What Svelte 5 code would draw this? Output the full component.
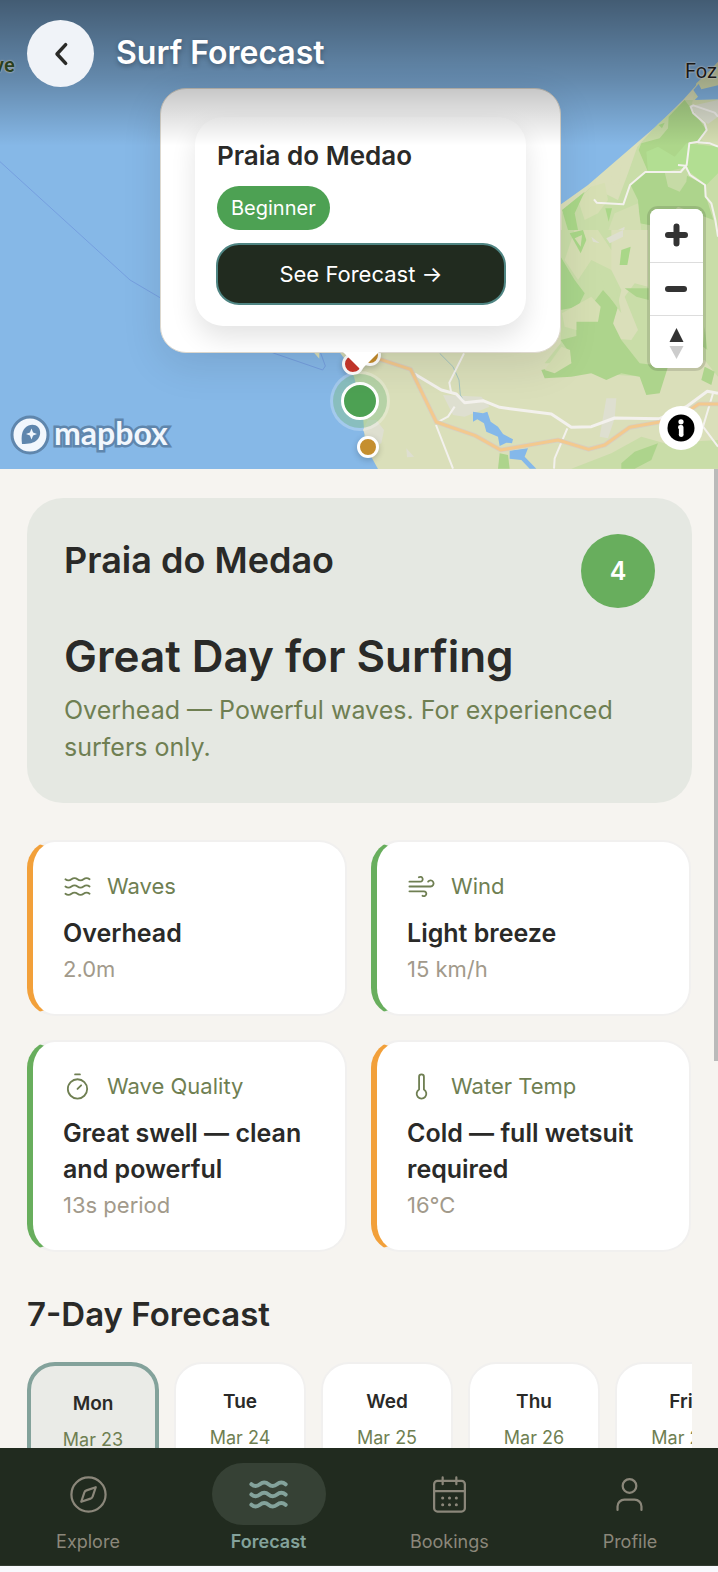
<script lang="ts">
  type IconName = 'waves' | 'wind' | 'timer' | 'thermometer' | 'compass' | 'calendar' | 'user'

  interface Condition {
    icon: IconName
    label: string
    title: string
    value: string
    tone: 'good' | 'fair'
  }

  const conditions: Condition[] = [
    { icon: 'waves', label: 'Waves', title: 'Overhead', value: '2.0m', tone: 'fair' },
    { icon: 'wind', label: 'Wind', title: 'Light breeze', value: '15 km/h', tone: 'good' },
    { icon: 'timer', label: 'Wave Quality', title: 'Great swell — clean and powerful', value: '13s period', tone: 'good' },
    { icon: 'thermometer', label: 'Water Temp', title: 'Cold — full wetsuit required', value: '16°C', tone: 'fair' },
  ]

  const days = [
    { day: 'Mon', date: 'Mar 23' },
    { day: 'Tue', date: 'Mar 24' },
    { day: 'Wed', date: 'Mar 25' },
    { day: 'Thu', date: 'Mar 26' },
    { day: 'Fri', date: 'Mar 27' },
    { day: 'Sat', date: 'Mar 28' },
    { day: 'Sun', date: 'Mar 29' },
  ]

  const tabs: { icon: IconName; label: string }[] = [
    { icon: 'compass', label: 'Explore' },
    { icon: 'waves', label: 'Forecast' },
    { icon: 'calendar', label: 'Bookings' },
    { icon: 'user', label: 'Profile' },
  ]

  let selectedDay = $state(0)
  let activeTab = $state('Forecast')
</script>

{#snippet icon(name: IconName, width: number)}
  <svg class="icon" viewBox="0 0 24 24" fill="none" stroke="currentColor" stroke-width={width} stroke-linecap="round" stroke-linejoin="round" aria-hidden="true">
    {#if name === 'waves'}
      {#each [0, 6, 12] as dy}
        <path transform="translate(0 {dy})" d="M2 6c.6.5 1.2 1 2.5 1C7 7 7 5 9.5 5c2.6 0 2.4 2 5 2 2.5 0 2.5-2 5-2 1.3 0 1.9.5 2.5 1" />
      {/each}
    {:else if name === 'wind'}
      <path d="M12.8 19.6A2 2 0 1 0 14 16H2" />
      <path d="M17.5 8a2.5 2.5 0 1 1 2 4H2" />
      <path d="M9.8 4.4A2 2 0 1 1 11 8H2" />
    {:else if name === 'timer'}
      <line x1="10" y1="2" x2="14" y2="2" />
      <line x1="12" y1="14" x2="15" y2="11" />
      <circle cx="12" cy="14" r="8" />
    {:else if name === 'thermometer'}
      <path d="M14 4v10.54a4 4 0 1 1-4 0V4a2 2 0 0 1 4 0Z" />
    {:else if name === 'compass'}
      <circle cx="12" cy="12" r="10" />
      <path d="m16.24 7.76-1.804 5.411a2 2 0 0 1-1.265 1.265L7.76 16.24l1.804-5.411a2 2 0 0 1 1.265-1.265z" />
    {:else if name === 'calendar'}
      <path d="M8 2v4M16 2v4M3 10h18" />
      <rect x="3" y="4" width="18" height="18" rx="2" />
      <path stroke-width="1.8" d="M8 14h.01M12 14h.01M16 14h.01M8 18h.01M12 18h.01M16 18h.01" />
    {:else}
      <circle cx="12" cy="7" r="4" />
      <path d="M19 21v-2a4 4 0 0 0-4-4H9a4 4 0 0 0-4 4v2" />
    {/if}
  </svg>
{/snippet}

<div class="app">
  <section class="map" aria-label="Surf spots map">
    <svg class="terrain" viewBox="0 0 2154 1407" preserveAspectRatio="xMidYMid slice" aria-hidden="true">
      <rect width="2154" height="1407" fill="#86b8e7" />
      <!-- coastline -->
      <path fill="#dadfba" d="M2154 185L2094 250 2049 300 1979 370 1909 430 1764 555 1684 612 1400 800 1014 1050 1040 1085 1062 1130 1080 1200 1090 1260 1094 1310 1108 1360 1134 1407H2154z" />
      <path fill="#dadfba" d="M940 1056L958 1076 958 1056z" />

      <!-- upper right land -->
      <g transform="translate(1074 0)">
        <path fill="#c9dda8" d="M980 300L900 372 838 440 810 520 780 600 700 560 612 640 612 720 1080 720 1080 300z" />
        <path fill="#d6dfb3" d="M1015 250L1080 190 1080 440 1030 420 1045 380 1000 320z" />
        <path fill="#dde0d0" d="M1000 318L1080 300 1080 350 1050 372 1010 340z" />
        <path fill="#86b8e7" d="M1006 270L1020 290 1010 300 1080 298 1080 256 1030 268 1022 252z" />
        <path fill="#add68a" d="M980 300L932 350 930 385 905 415 850 430 842 450 870 515 960 515 990 430 1020 425 1045 390 1010 340z" />
        <path fill="#b2de92" d="M865 455L900 440 950 470 985 430 1080 440 1080 520 1045 555 1000 520 870 515z" />
        <path fill="#add48c" d="M818 556L860 516 970 518 1042 556 1044 590 1066 660 960 620 900 680 845 670 840 600z" />
        <path fill="#c6dba6" d="M920 516L990 500 985 545 965 575 930 560z" />
        <path fill="#d6dfb3" d="M700 560L740 548 750 600 720 640 680 660 660 600z" />
        <path fill="#dadfba" d="M760 500L790 490 785 550 762 555z" />
        <path fill="#a9d788" d="M612 630L680 575 650 640 660 690 690 720 650 720 630 690z" />
        <path fill="#d3deb2" d="M770 640L840 610 850 690 800 720 740 720z" />
        <path fill="#dedfd0" d="M760 700L800 680 795 720 740 720z" />
        <path fill="#a9d788" d="M742 625L762 625 752 665z" />
        <path fill="#a9d788" d="M902 375L920 368 912 385z" />
        <path fill="#d6dfb3" d="M900 680L960 650 1000 700 960 720 890 720z" />
      </g>

      <!-- lower right land -->
      <g transform="translate(1074 690)">
        <path fill="#c9dda8" d="M608 0H1080V440L1040 390 990 400 900 420 860 440 700 430 610 400 560 400 608 340z" />
        <path fill="#d6dfb3" d="M650 0H720L760 60 850 100 780 130 700 90 660 150 620 90z" />
        <path fill="#dadfba" d="M760 0H870V170L830 160 800 200 840 300 820 330 755 325 790 180 760 120z" />
        <path fill="#a9d788" d="M635 10L675 0 685 30 668 70z" />
        <path fill="#d6dfb3" d="M650 25L672 15 668 50z" />
        <path fill="#a9d58b" d="M608 80L650 150 680 190 660 230 608 240z" />
        <path fill="#add48c" d="M655 275L690 240 735 180 780 230 765 280 790 330 845 400 930 410 905 490 865 495 845 440 790 430 745 450 700 430 640 440 560 445 550 420 640 400 635 370 608 330 655 318z" />
        <path fill="#d6dfb3" d="M612 250L700 200 728 230 720 275 655 275 655 300 620 290z" />
        <path fill="#add48c" d="M800 175H872V210L835 200z" />
        <path fill="#a9d788" d="M790 60L818 50 808 105 785 105z" />
        <path fill="#dedfd0" d="M745 25L795 0 795 20 755 40zM700 20L725 40 705 35z" />
        <path fill="#c9dda8" d="M720 110L770 150 790 250 740 180z" />
        <path fill="#add48c" d="M1040 410L1070 425 1060 465 1030 450zM1040 290L1048 360 1035 350z" />
        <path fill="#d6dfb3" d="M560 420L610 350 636 360 640 400 590 430z" />
        <path fill="#c9dda8" d="M640 716L760 670 850 620 920 640 1080 630V716z" />
        <path fill="#add48c" d="M790 700L830 665 900 640 880 690 830 716H790z" />
        <path fill="#add48c" d="M425 670L450 675 455 716H420z" />
        <path fill="#dedfd0" d="M255 495L370 500 395 530 320 560 285 555zM745 505L775 505 770 565 750 625 725 620zM30 570L55 570 78 600 70 640 40 650 15 600zM145 655L168 680 147 682z" />

        <path fill="none" stroke="#a5c5c0" stroke-width="3" d="M245 370L285 410 303 450 307 495 322 520" />
        <path fill="#84b8ea" d="M345 545L375 550 388 545 398 575 420 590 435 612 465 628 462 640 445 638 425 648 420 620 385 605 378 580 358 568 345 575z" />
        <path fill="#84b8ea" d="M455 662L510 655 500 680 535 716H515L490 690 455 686z" />

        <g fill="none" stroke="#f3f1ed" stroke-linejoin="round">
          <path stroke-width="9" d="M170 432L250 480 295 492 320 518 375 512 425 532 580 552 640 592 700 590 770 564 905 566 985 530 1048 484 1080 490" />
          <path stroke-width="6" d="M318 370L274 458 280 490M232 580L270 560 290 530M234 585L285 716M628 595L590 685 588 716M1065 490L1035 590 1080 650" />
        </g>
        <path fill="none" stroke="#d7cfc0" stroke-width="14" stroke-linejoin="round" d="M60 386L158 418 235 576 350 616 428 660 600 630 692 658 740 645 815 592 905 576 965 560 1022 522H1080" />
        <path fill="none" stroke="#f3c98e" stroke-width="9" stroke-linejoin="round" d="M60 386L158 418 235 576 350 616 428 660 600 630 692 658 740 645 815 592 905 576 965 560 1022 522H1080" />
      </g>

      <path fill="none" stroke="#f3f1ed" stroke-width="6" stroke-linejoin="round" d="M1782 598L1790 608 1870 613 1890 555 1936 516 2042 516 2060 495 2068 430 2094 425 2120 390 2114 370 2080 340 2072 320 2080 316 2144 338 2154 350M2094 427L2130 430 2154 440M2034 495L2056 497 2070 525 2115 555 2117 590 2134 610 2146 660 2154 710" />
      <path fill="none" stroke="#759fdf" stroke-width="3" d="M0 485L390 840 480 893 820 1059 968 1110 976 1098 962 1059" />
    </svg>

    <span class="place place-west">ve</span>
    <span class="place place-east">Foz</span>

    <span class="pin pin-red"></span>
    <span class="pin pin-amber"></span>
    <span class="pin pin-selected"></span>
    <span class="pin pin-south"></span>

    <div class="popup">
      <div class="popup-card">
        <h2>Praia do Medao</h2>
        <span class="badge">Beginner</span>
        <button class="popup-btn">See Forecast →</button>
      </div>
    </div>

    <header class="topbar">
      <button class="back" aria-label="Back">
        <svg width="32" height="32" viewBox="0 0 24 24" fill="none" stroke="currentColor" stroke-width="2.6" stroke-linecap="round" stroke-linejoin="round">
          <path d="M15.500 5l-6.500 7 6.500 7" />
        </svg>
      </button>
      <h1>Surf Forecast</h1>
    </header>

    <div class="map-controls">
      <button aria-label="Zoom in">
        <svg width="53" height="53" viewBox="0 0 53 53" stroke="#333" stroke-width="6" stroke-linecap="round"><path d="M18 26h17M26.500 17.500v17" /></svg>
      </button>
      <button aria-label="Zoom out">
        <svg width="53" height="53" viewBox="0 0 53 53" stroke="#333" stroke-width="6" stroke-linecap="round"><path d="M18 26h16" /></svg>
      </button>
      <button aria-label="Reset bearing to north">
        <svg width="53" height="53" viewBox="0 0 53 53"><path fill="#333" d="M26.500 12l7 14h-14z" /><path fill="#ccc" d="M26.500 43l7-13h-14z" /></svg>
      </button>
    </div>

    <a class="mapbox" href="#mapbox" aria-label="Mapbox">
      <svg width="40" height="40" viewBox="0 0 40 40" aria-hidden="true">
        <circle cx="20" cy="20" r="18" fill="#f2f7fd" stroke="#5f86ad" stroke-width="3" />
        <path fill="#5f86ad" d="M12 29c-1-8 0-13 3-16 4-4 10-4 13-1s3 9-1 13c-3 3-8 4-15 4z" />
        <path fill="#f2f7fd" d="M21.500 13.500l1.600 3.900 3.900 1.600-3.900 1.600-1.600 3.900-1.600-3.900-3.900-1.600 3.900-1.600z" />
      </svg>
      <span>mapbox</span>
    </a>

    <button class="info" aria-label="Map attribution">
      <svg width="28" height="28" viewBox="0 0 28 28" aria-hidden="true">
        <circle cx="14" cy="14" r="13.500" />
        <circle cx="14" cy="7.800" r="2.600" fill="#fff" />
        <path d="M13.300 13.200h.9v7.600M14 20.500h.4" fill="none" stroke="#fff" stroke-width="4.600" stroke-linecap="round" stroke-linejoin="round" />
      </svg>
    </button>
  </section>

  <main class="content">
    <section class="hero">
      <div class="hero-top">
        <h2 class="spot">Praia do Medao</h2>
        <span class="score">4</span>
      </div>
      <p class="verdict">Great Day for Surfing</p>
      <p class="summary">Overhead — Powerful waves. For experienced surfers only.</p>
    </section>

    <section class="conditions">
      {#each conditions as item}
        <article class="condition {item.tone}">
          <div class="condition-label">
            {@render icon(item.icon, 1.5)}
            <span>{item.label}</span>
          </div>
          <h3>{item.title}</h3>
          <p>{item.value}</p>
        </article>
      {/each}
    </section>

    <section class="week">
      <h2>7-Day Forecast</h2>
      <div class="days">
        {#each days as d, i}
          <button class="day" class:selected={selectedDay === i} onclick={() => (selectedDay = i)}>
            <strong>{d.day}</strong>
            <span>{d.date}</span>
          </button>
        {/each}
      </div>
    </section>

    <div class="scroll-thumb"></div>
  </main>

  <nav class="tabbar">
    {#each tabs as tab}
      <button class="tab" class:active={activeTab === tab.label} onclick={() => (activeTab = tab.label)}>
        <span class="tab-icon">{@render icon(tab.icon, activeTab === tab.label ? 2.4 : 1.3)}</span>
        <span class="tab-label">{tab.label}</span>
      </button>
    {/each}
  </nav>
</div>

<style>
  :global(body) {
    margin: 0;
    background: #f8f9fd;
  }

  .app {
    --ink: #2a2a28;
    --olive: #6f7f52;
    --forest: #212b1f;
    --sage: #83a29b;
    --good: #68ae5d;
    --fair: #f2a03a;
    display: flex;
    flex-direction: column;
    box-sizing: border-box;
    height: 100vh;
    padding-bottom: 6px;
    color: var(--ink);
    font-family: Inter, 'Liberation Sans', sans-serif;
  }

  h1,
  h2,
  h3,
  p {
    margin: 0;
  }

  button {
    padding: 0;
    border: none;
    font: inherit;
    color: inherit;
    cursor: pointer;
  }

  /* map */
  .map {
    position: relative;
    flex: none;
    height: 469px;
    overflow: hidden;
  }

  .terrain {
    display: block;
    width: 100%;
    height: 100%;
  }

  .place {
    position: absolute;
    font-family: Roboto, sans-serif;
    font-size: 20px;
    line-height: 24px;
    text-shadow: 0 0 2px #fff, 0 0 2px #fff;
  }

  .place-west {
    top: 53px;
    left: -6px;
    color: #3a5a2c;
    font-weight: 600;
  }

  .place-east {
    top: 59px;
    right: 1px;
    color: #222;
  }

  .pin {
    position: absolute;
    left: 50%;
    box-sizing: border-box;
    width: 22px;
    height: 22px;
    border: 3px solid #fff;
    border-radius: 50%;
    box-shadow: 0 2px 6px rgba(0, 0, 0, 0.2);
  }

  .pin-red {
    top: 353px;
    margin-left: -17px;
    background: #c9372c;
  }

  .pin-amber {
    top: 344px;
    margin-left: 0;
    background: #c58c2c;
  }

  .pin-selected {
    top: 382px;
    width: 38px;
    height: 38px;
    margin-left: -18px;
    background: #4da153;
    box-shadow: 0 0 0 8px rgba(77, 161, 83, 0.3), 0 0 0 11px rgba(255, 255, 255, 0.25);
  }

  .pin-south {
    top: 436px;
    margin-left: -2px;
    background: #c58f2f;
  }

  .popup {
    position: absolute;
    top: 88px;
    left: 50%;
    box-sizing: border-box;
    width: 401px;
    margin-left: -199px;
    padding: 28px 34px 26px;
    border: 1px solid #ddd8ce;
    border-radius: 26px;
    background: #fff;
    box-shadow: 0 12px 40px rgba(0, 0, 0, 0.1);
  }

  .popup::after {
    content: '';
    position: absolute;
    top: 100%;
    left: 50%;
    margin-left: -18px;
    border: 18px solid transparent;
    border-top-color: #fff;
    border-bottom: none;
  }

  .popup-card {
    display: flex;
    flex-direction: column;
    align-items: flex-start;
    padding: 21px 20px 21px 21px;
    border-radius: 28px;
    background: #fff;
    box-shadow: 0 12px 26px rgba(0, 0, 0, 0.11);
  }

  .popup-card h2 {
    margin: 0 0 12px 1px;
    font-size: 26px;
    line-height: 36px;
    font-weight: 600;
  }

  .badge {
    margin: 0 0 13px 1px;
    padding: 0 14px;
    border-radius: 22px;
    background: #4da153;
    color: #fff;
    font-size: 20px;
    line-height: 44px;
  }

  .popup-btn {
    align-self: stretch;
    height: 62px;
    border: 2px solid #4f8583;
    border-radius: 23px;
    background: var(--forest);
    color: #fff;
    font-size: 22px;
  }

  .topbar {
    position: absolute;
    top: 0;
    left: 0;
    right: 0;
    display: flex;
    align-items: flex-start;
    gap: 22px;
    box-sizing: border-box;
    height: 146px;
    padding: 20px 27px;
    background: linear-gradient(rgba(0, 0, 0, 0.5), rgba(0, 0, 0, 0.25) 55%, transparent);
  }

  .back {
    display: grid;
    place-items: center;
    width: 67px;
    height: 67px;
    border-radius: 50%;
    background: #f0f3f8;
    color: var(--ink);
  }

  .topbar h1 {
    color: #fff;
    font-size: 32px;
    line-height: 66px;
    font-weight: 600;
    text-shadow: 0 2px 5px rgba(0, 0, 0, 0.3);
  }

  .map-controls {
    position: absolute;
    top: 209px;
    right: 15px;
    display: flex;
    flex-direction: column;
    overflow: hidden;
    border-radius: 8px;
    background: #fff;
    box-shadow: 0 0 0 3px rgba(0, 0, 0, 0.12);
  }

  .map-controls button {
    width: 53px;
    height: 53px;
    background: #fff;
  }

  .map-controls button + button {
    border-top: 1px solid #ddd;
  }

  .map-controls svg {
    display: block;
  }

  .mapbox {
    position: absolute;
    left: 10px;
    bottom: 12px;
    display: flex;
    align-items: center;
    gap: 4px;
    color: #f2f7fd;
    font-family: Lato, sans-serif;
    font-size: 32px;
    line-height: 40px;
    font-weight: 700;
    text-decoration: none;
  }

  .mapbox span {
    padding-bottom: 4px;
    -webkit-text-stroke: 5px #5f86ad;
    paint-order: stroke fill;
  }

  .info {
    position: absolute;
    right: 15px;
    bottom: 19px;
    display: grid;
    place-items: center;
    width: 44px;
    height: 44px;
    border-radius: 50%;
    background: #fff;
  }

  /* forecast */
  .content {
    position: relative;
    flex: 1;
    min-height: 0;
    overflow: hidden;
    padding: 29px 26px 0 27px;
    background: #f6f4f0;
  }

  .scroll-thumb {
    position: absolute;
    top: 0;
    right: 0;
    width: 4px;
    height: 592px;
    background: #bababa;
  }

  .hero {
    padding: 36px 37px 37px;
    border-radius: 36px;
    background: #e5e8e2;
  }

  .hero-top {
    display: flex;
    align-items: flex-start;
    justify-content: space-between;
    margin-bottom: 20px;
  }

  .spot {
    font-size: 36px;
    line-height: 52px;
    font-weight: 600;
  }

  .score {
    width: 74px;
    border-radius: 50%;
    background: var(--good);
    color: #fff;
    font-size: 25px;
    line-height: 74px;
    font-weight: 600;
    text-align: center;
  }

  .verdict {
    margin-bottom: 8px;
    font-size: 44px;
    line-height: 56px;
    font-weight: 600;
  }

  .summary {
    color: var(--olive);
    font-size: 25px;
    line-height: 37px;
  }

  .conditions {
    display: grid;
    grid-template-columns: 1fr 1fr;
    gap: 24px;
    margin: 37px 1px 0 0;
  }

  .condition {
    padding: 27px 28px 26px 30px;
    border: 2px solid #f1f0ef;
    border-left-width: 6px;
    border-radius: 28px;
    background: #fff;
  }

  .condition.good {
    border-left-color: var(--good);
  }

  .condition.fair {
    border-left-color: var(--fair);
  }

  .condition-label {
    display: flex;
    align-items: center;
    gap: 15px;
    margin-bottom: 12px;
    color: var(--olive);
    font-size: 22px;
    line-height: 34px;
  }

  .condition-label .icon {
    width: 29px;
    height: 29px;
  }

  .condition h3 {
    font-size: 25px;
    line-height: 36px;
    font-weight: 600;
  }

  .condition p {
    color: #a29a8b;
    font-size: 22px;
    line-height: 37px;
  }

  .week {
    margin-top: 38px;
  }

  .week h2 {
    font-size: 33px;
    line-height: 48px;
    font-weight: 600;
  }

  .days {
    display: flex;
    gap: 15px;
    margin-top: 24px;
    overflow: hidden;
  }

  .day {
    display: flex;
    flex: none;
    flex-direction: column;
    align-items: center;
    gap: 8px;
    box-sizing: border-box;
    width: 132px;
    height: 220px;
    padding-top: 24px;
    border: 2px solid #f1f0ef;
    border-radius: 28px;
    background: #fff;
    font-size: 18px;
    line-height: 28px;
  }

  .day.selected {
    border: 4px solid var(--sage);
    background: #eaebe7;
  }

  .day strong {
    font-size: 19px;
    font-weight: 600;
  }

  .day span {
    color: var(--olive);
  }

  /* tab bar */
  .tabbar {
    display: flex;
    flex: none;
    justify-content: space-between;
    padding: 15px 31px 6px;
    border-bottom: 1px solid #333c31;
    background: var(--forest);
  }

  .tab {
    display: flex;
    flex-direction: column;
    align-items: center;
    width: 114px;
    background: none;
    color: #8b877a;
  }

  .tab.active {
    color: var(--sage);
  }

  .tab-icon {
    display: grid;
    place-items: center;
    width: 100%;
    height: 62px;
    border-radius: 31px;
  }

  .tab-icon .icon {
    width: 41px;
    height: 41px;
  }

  .tab.active .tab-icon {
    background: #364135;
  }

  .tab-label {
    font-size: 18px;
    line-height: 34px;
  }

  .tab.active .tab-label {
    font-weight: 600;
  }
</style>
